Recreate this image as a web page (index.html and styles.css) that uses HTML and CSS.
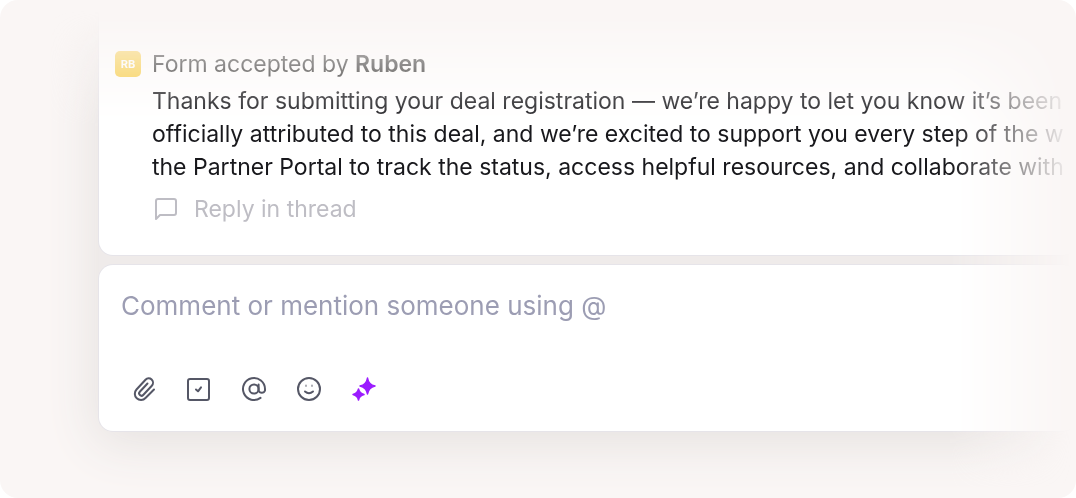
FILE: index.html
```
<!DOCTYPE html>
<html lang="en">
<head>
    <meta charset="UTF-8">
    <meta name="viewport" content="width=device-width, initial-scale=1">
    <title>Deal thread</title>
    <link rel="stylesheet" href="styles.css">
</head>
<body>
    <main class="stage">
        <div class="fade-top">
            <div class="fade-right">
                <div class="thread">
                    <!-- message -->
                    <article class="card message">
                        <span class="avatar">RB</span>
                        <div class="message-body">
                            <p class="message-title">Form accepted by <strong>Ruben</strong></p>
                            <p class="message-text">Thanks for submitting your deal registration — we’re happy to let you know it’s been<br>officially attributed to this deal, and we’re excited to support you every step of the w<br>the Partner Portal to track the status, access helpful resources, and collaborate with</p>
                            <button class="reply" type="button">
                                <svg width="26" height="26" viewBox="0 0 26 26" fill="none" stroke="currentColor" stroke-width="2" stroke-linejoin="round"><path d="M4 23V5a2 2 0 0 1 2-2h16a2 2 0 0 1 2 2v12a2 2 0 0 1-2 2H8z"/></svg>
                                Reply in thread
                            </button>
                        </div>
                    </article>
                    <!-- composer -->
                    <form class="card composer">
                        <input class="composer-input" type="text" aria-label="Comment" placeholder="Comment or mention someone using @">
                        <div class="tools">
                            <button class="tool" type="button" aria-label="Attach file">
                                <svg width="28" height="28" viewBox="0 0 28 28" fill="none" stroke="currentColor" stroke-width="2" stroke-linecap="round" stroke-linejoin="round"><path d="M24 14.500l-8.500 8.500a6 6 0 0 1-9-8.500l9-9.800a4.300 4.300 0 0 1 6.300 6l-8.600 9.300a2.300 2.300 0 0 1-3.400-3.200l7.700-8.300"/></svg>
                            </button>
                            <button class="tool" type="button" aria-label="Add task">
                                <svg width="28" height="28" viewBox="0 0 28 28" fill="none" stroke="currentColor" stroke-width="2" stroke-linecap="round" stroke-linejoin="round"><rect x="3" y="4" width="21" height="21" rx="2"/><path d="M11 14.500l2 1.800 3-4"/></svg>
                            </button>
                            <button class="tool" type="button" aria-label="Mention">
                                <svg width="28" height="28" viewBox="0 0 28 28" fill="none" stroke="currentColor" stroke-width="2" stroke-linecap="round"><circle cx="14" cy="14" r="4.6"/><path d="M18.600 9.400V15.500a3.400 3.400 0 0 0 6.400 0V14a11 11 0 1 0-4.500 8.900"/></svg>
                            </button>
                            <button class="tool" type="button" aria-label="Emoji">
                                <svg width="28" height="28" viewBox="0 0 28 28" fill="none" stroke="currentColor" stroke-width="2" stroke-linecap="round"><circle cx="14" cy="14" r="11"/><path d="M10 16.500q4 3.400 8 0"/><path d="M11 10.500v.5M17 10.500v.5" opacity=".5"/></svg>
                            </button>
                            <button class="tool tool-ai" type="button" aria-label="Write with AI">
                                <svg width="28" height="28" viewBox="0 0 28 28" fill="currentColor" stroke="currentColor" stroke-width="1.5" stroke-linejoin="round"><path d="M17.500 3q1 6.500 7.500 8-6.500 1.500-7.500 8-1-6.500-7.500-8 6.500-1.500 7.500-8zM8.500 14q1 4.500 5.500 5.500-4.500 1-5.500 5.500-1-4.500-5.500-5.500 4.500-1 5.500-5.500z"/></svg>
                            </button>
                        </div>
                    </form>
                </div>
            </div>
        </div>
    </main>
</body>
</html>
```
FILE: styles.css
```
*{box-sizing: border-box;}
body, p{margin: 0;}
body{
    background: #fff;
    font-family: Inter, "Liberation Sans", sans-serif;
}
button, input{font: inherit;border: 0;background: none;padding: 0;}

.stage{
    min-height: 100vh;
    background: #faf6f5;
    border-radius: 18px;
    overflow: hidden;
}
/* the thread dissolves into the stage at the top and on the right */
.fade-top{
    -webkit-mask-image: linear-gradient(to bottom, transparent 10px, #000 126px);
    mask-image: linear-gradient(to bottom, transparent 10px, #000 126px);
}
.fade-right{
    padding: 0 0 67px 99px;
    overflow: hidden;
    -webkit-mask-image: linear-gradient(to left, transparent 4px, #000 126px);
    mask-image: linear-gradient(to left, transparent 4px, #000 126px);
}
.thread{
    display: flex;
    flex-direction: column;
    gap: 10px;
    background: #efebea;
    border-radius: 14px;
    box-shadow: 0 8px 50px 4px #e5e1df;
}
.card{
    background: #fff;
    border-radius: 14px;
    box-shadow: 0 0 0 1px #e6e4e9;
}

.message{
    display: flex;
    gap: 11px;
    padding: 48px 0 30px 16px;
    border-radius: 0 0 14px 14px;
    overflow: hidden;
}
.avatar{
    flex: none;
    width: 26px;
    height: 26px;
    margin-top: 3px;
    border-radius: 5px;
    background: #f8c82f;
    color: #fff;
    font-size: 11px;
    font-weight: 700;
    line-height: 26px;
    text-align: center;
}
.message-body{white-space: nowrap;}
.message-title{
    color: #161616;
    font-size: 23px;
    line-height: 32px;
    margin-bottom: 5px;
}
.message-title strong{font-weight: 600;}
.message-text{
    color: #18181c;
    font-size: 23px;
    line-height: 33px;
}
.reply{
    display: flex;
    align-items: center;
    gap: 16px;
    margin-top: 9px;
    color: #bebdc4;
    font-size: 23px;
    line-height: 32px;
}

.composer{padding: 22px;}
.composer-input{
    display: block;
    width: 100%;
    height: 36px;
    color: #18181c;
    font-size: 26px;
    outline: 0;
}
.composer-input::placeholder{color: #9c9db3;opacity: 1;}
.tools{
    display: flex;
    gap: 15px;
    margin: 46px 0 0 3px;
}
.tool{
    display: flex;
    align-items: center;
    justify-content: center;
    width: 40px;
    height: 40px;
    color: #555766;
}
.tool-ai{color: #9b1cff;}
```
